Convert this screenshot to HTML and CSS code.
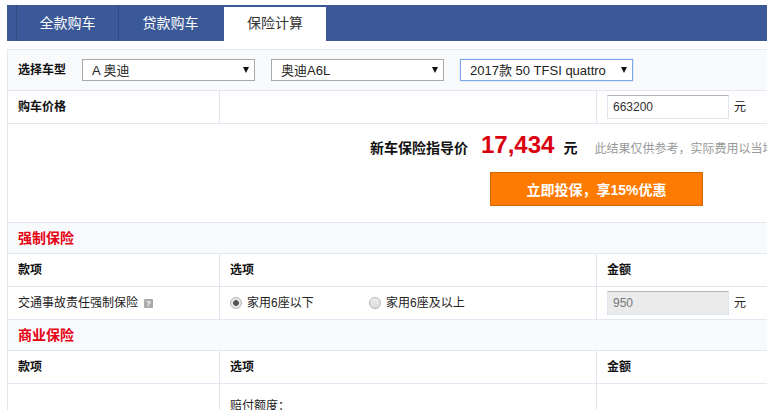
FILE: index.html
```html
<!DOCTYPE html>
<html lang="zh-CN">
<head>
<meta charset="utf-8">
<title>保险计算</title>
<link rel="stylesheet" href="styles.css">
</head>
<body>
<div class="page">
  <nav class="tabs">
    <a class="tab">全款购车</a>
    <a class="tab">贷款购车</a>
    <a class="tab active">保险计算</a>
  </nav>
  <main class="panel">
    <div class="row pick">
      <strong class="pick-label">选择车型</strong>
      <span class="select s1"><select><option>A 奥迪</option></select></span>
      <span class="select s2"><select><option>奥迪A6L</option></select></span>
      <span class="select s3 focus"><select><option>2017款 50 TFSI quattro</option></select></span>
    </div>
    <div class="row cols price-row">
      <div class="cell"><strong>购车价格</strong></div>
      <div class="cell"></div>
      <div class="cell amount"><input class="num" value="663200"><span>元</span></div>
    </div>
    <section class="result">
      <div class="result-line">
        <strong class="r-label">新车保险指导价</strong>
        <strong class="r-num">17,434</strong>
        <strong class="r-unit">元</strong>
        <span class="r-hint">此结果仅供参考，实际费用以当地保险公司报价为准</span>
      </div>
      <button class="cta">立即投保，享15%优惠</button>
    </section>
    <div class="row sec"><h2>强制保险</h2></div>
    <div class="row cols head">
      <div class="cell"><strong>款项</strong></div>
      <div class="cell"><strong>选项</strong></div>
      <div class="cell"><strong>金额</strong></div>
    </div>
    <div class="row cols item">
      <div class="cell">交通事故责任强制保险<i class="help">?</i></div>
      <div class="cell radios">
        <label class="radio r-first"><input type="radio" name="seat" checked>家用6座以下</label>
        <label class="radio"><input type="radio" name="seat">家用6座及以上</label>
      </div>
      <div class="cell amount"><input class="num off" value="950" disabled><span>元</span></div>
    </div>
    <div class="row sec sec2"><h2>商业保险</h2></div>
    <div class="row cols head">
      <div class="cell"><strong>款项</strong></div>
      <div class="cell"><strong>选项</strong></div>
      <div class="cell"><strong>金额</strong></div>
    </div>
    <div class="row cols last">
      <div class="cell"></div>
      <div class="cell"><span class="limit">赔付额度：</span></div>
      <div class="cell"></div>
    </div>
  </main>
</div>
</body>
</html>
```
FILE: styles.css
```css
* { box-sizing: border-box; }
html, body { margin: 0; height: 100%; overflow: hidden; background: #fff; }
body {
  font: 12px/1.2 "Liberation Sans", "Noto Sans CJK SC", sans-serif;
  color: #222;
}
.page { width: 960px; padding: 5px 0 0 7px; }

.tabs { display: flex; height: 36px; background: #3b5998; padding-left: 9px; }
.tab {
  width: 102px;
  border-left: 1px solid #31497e;
  color: #fff;
  font-size: 14px;
  line-height: 36px;
  text-align: center;
}
.tab:nth-child(2) { width: 104px; }
.tab.active {
  width: 102px;
  margin: 2px 0 0 2px;
  border-left: 0;
  background: #fff;
  color: #333;
  line-height: 33px;
}

.panel { margin-top: 8px; border-left: 1px solid #e4e8f1; border-top: 1px solid #e4e8f1; }
.row { border-bottom: 1px solid #e1e6f0; }
.cols { display: grid; grid-template-columns: 211px 377px 1fr; }
.cell { display: flex; align-items: center; padding: 1px 0 0 10px; border-left: 1px solid #e1e6f0; }
.cell:first-child { border-left: 0; }
strong { color: #111; }

.pick { display: flex; align-items: center; height: 41px; background: #f9fafc; padding: 1px 0 0 10px; }
.pick-label { width: 64px; }
.select { position: relative; display: block; height: 22px; margin-top: -1px; }
.select::after {
  content: "";
  position: absolute; right: 6px; top: 8px;
  border: 3.5px solid transparent;
  border-top: 6px solid #111;
  border-bottom: 0;
}
.select select {
  display: block; width: 100%; height: 100%;
  appearance: none;
  border: 1px solid #a9a9a9; border-radius: 0;
  background: #fff;
  padding: 0 0 0 9px;
  color: #222;
  font: 13px "Liberation Sans", "Noto Sans CJK SC", sans-serif;
}
.s1 { width: 173px; }
.s2 { width: 173px; margin-left: 16px; }
.s3 { width: 173px; margin-left: 16px; }
.focus select { border: 1px solid #7ea6e8; box-shadow: 0 0 1px #7ea6e8; }

.price-row { height: 33px; }
.amount { gap: 5px; }
.num {
  width: 122px; height: 24px;
  margin-top: -1px;
  border: 1px solid #dfe5ef; border-top-color: #b5b5ba;
  padding: 0 5px;
  color: #333;
  font: 12px "Liberation Sans", sans-serif;
}
.off { background: #ebebeb; color: #777; }

.result { height: 99px; border-bottom: 1px solid #e1e6f0; padding-top: 7px; }
.result-line { display: flex; align-items: baseline; height: 35px; margin-left: 362px; white-space: nowrap; }
.r-label { font-size: 14px; }
.r-num { margin-left: 13px; color: #d9000f; font-size: 24px; }
.r-unit { margin-left: 9px; font-size: 14px; }
.r-hint { margin-left: 17px; color: #999; }
.cta {
  display: block;
  width: 213px; height: 34px;
  margin: 6px 0 0 482px;
  border: 1px solid #d06a06;
  background: #ff7a00;
  color: #fff;
  font: bold 14px "Liberation Sans", "Noto Sans CJK SC", sans-serif;
}

.sec { height: 31px; display: flex; align-items: center; padding: 1px 0 0 10px; background: #f9fafc; }
.sec2 { height: 31px; }
h2 { margin: 0; color: #e60012; font-size: 14px; font-weight: bold; }
.head { height: 33px; }
.item { height: 33px; }
.help {
  display: inline-block; width: 9px; height: 9px; margin-left: 6px;
  border-radius: 1px; background: #aaa; color: #fff;
  font: bold 8px/9px "Liberation Sans", sans-serif; text-align: center;
}
.radio { display: flex; align-items: center; gap: 5px; }
.r-first { width: 139px; }
.radio input {
  appearance: none; margin: 0;
  width: 12px; height: 12px;
  border: 1px solid #b5b5b5; border-radius: 50%;
  background: linear-gradient(#eee, #dcdcdc);
}
.radio input:checked { background: radial-gradient(circle, #555 0 2.5px, #e6e6e6 3.2px); }
.last { height: 60px; }
.last .cell { align-items: flex-start; padding-top: 15px; }
```
